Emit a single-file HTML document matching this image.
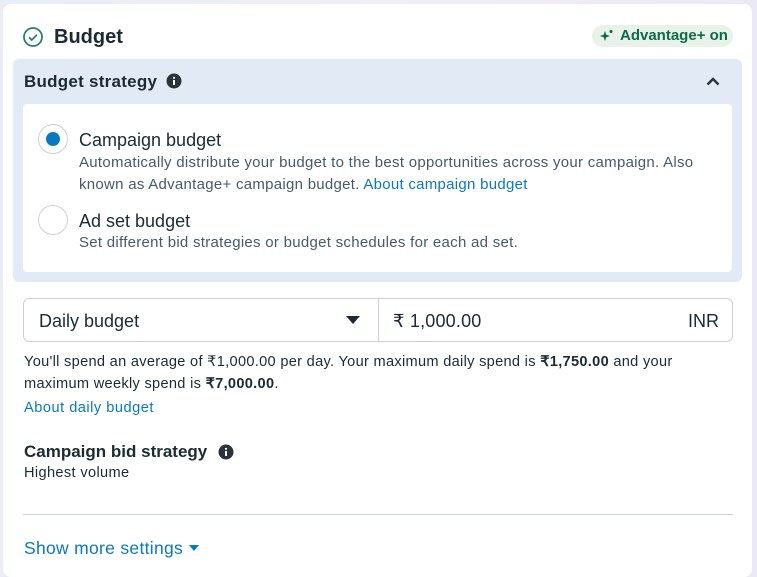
<!DOCTYPE html>
<html><head><meta charset="utf-8"><style>
*{margin:0;padding:0;box-sizing:border-box}
body{width:757px;height:577px;overflow:hidden;background:linear-gradient(90deg,#e8edf6 0%,#f1eef4 50%,#ece9f6 100%);font-family:"Liberation Sans",sans-serif;color:#1c2b33;position:relative}
.a{position:absolute;white-space:nowrap}
.card{position:absolute;left:3px;top:4px;width:749px;height:573px;background:#fff;border-radius:8px}
.blue{color:#0a78be}
</style></head><body>
<div class="card"></div>
<svg class="a" style="left:22px;top:26px" width="22" height="22" viewBox="0 0 22 22"><circle cx="11" cy="11" r="9" fill="none" stroke="#2f7d6b" stroke-width="1.8"/><path d="M7 11.3l2.7 2.7 5.3-5.3" fill="none" stroke="#2f7d6b" stroke-width="1.8"/></svg>
<div class="a" style="left:54px;top:26px;font-size:20px;font-weight:bold">Budget</div>
<div class="a" style="left:592px;top:25px;width:141px;height:22px;border-radius:11px;background:#e9f2e8"></div>
<svg class="a" style="left:599px;top:28px" width="16" height="16" viewBox="0 0 16 16"><path d="M6 3l1.3 3.7L11 8l-3.7 1.3L6 13l-1.3-3.7L1 8l3.7-1.3z" fill="#0b6b4a"/><circle cx="12" cy="3.5" r="1.5" fill="#0b6b4a"/></svg>
<div class="a" style="left:620px;top:27px;font-size:15px;font-weight:bold;color:#0b6b4a">Advantage+ on</div>
<div class="a" style="left:13px;top:59px;width:729px;height:223px;background:#e2ebf5;border-radius:6px"></div>
<div class="a" style="left:24px;top:72px;font-size:17px;font-weight:bold;letter-spacing:0.25px">Budget strategy</div>
<svg class="a" style="left:166px;top:73px" width="16" height="16" viewBox="0 0 16 16"><circle cx="8" cy="8" r="7.5" fill="#2a3339"/><rect x="7" y="7" width="2" height="5" fill="#fff"/><circle cx="8" cy="4.8" r="1.1" fill="#fff"/></svg>
<svg class="a" style="left:705px;top:76px" width="16" height="12" viewBox="0 0 16 12"><path d="M2.5 8.5L8 3l5.5 5.5" fill="none" stroke="#2a3339" stroke-width="2.4"/></svg>
<div class="a" style="left:23px;top:104px;width:709px;height:168px;background:#fff;border-radius:4px"></div>
<div class="a" style="left:38px;top:124px;width:30px;height:30px;border-radius:50%;border:1px solid #ccd0d5;background:#fff"></div>
<div class="a" style="left:46px;top:132px;width:14px;height:14px;border-radius:50%;background:#0a78be"></div>
<div class="a" style="left:79px;top:130px;font-size:18px">Campaign budget</div>
<div class="a" style="left:79px;top:152px;font-size:15px;line-height:22px;letter-spacing:0.28px;color:#465a69">Automatically distribute your budget to the best opportunities across your campaign. Also<br>known as Advantage+ campaign budget. <span class="blue">About campaign budget</span></div>
<div class="a" style="left:38px;top:205px;width:30px;height:30px;border-radius:50%;border:1px solid #ccd0d5;background:#fff"></div>
<div class="a" style="left:79px;top:211px;font-size:18px">Ad set budget</div>
<div class="a" style="left:79px;top:234px;font-size:15px;letter-spacing:0.28px;color:#465a69">Set different bid strategies or budget schedules for each ad set.</div>
<div class="a" style="left:23px;top:298px;width:710px;height:44px;border:1px solid #ccd0d5;border-radius:6px"></div>
<div class="a" style="left:378px;top:299px;width:1px;height:42px;background:#ccd0d5"></div>
<div class="a" style="left:39px;top:311px;font-size:18px">Daily budget</div>
<svg class="a" style="left:345px;top:315px" width="16" height="10" viewBox="0 0 16 10"><path d="M1 1h14L8 9z" fill="#1c2b33"/></svg>
<div class="a" style="left:393px;top:311px;font-size:18px;letter-spacing:0.2px">₹ 1,000.00</div>
<div class="a" style="left:688px;top:311px;font-size:18px">INR</div>
<div class="a" style="left:24px;top:351px;font-size:14.6px;line-height:22px;letter-spacing:0.3px">You'll spend an average of ₹1,000.00 per day. Your maximum daily spend is <b>₹1,750.00</b> and your<br>maximum weekly spend is <b>₹7,000.00</b>.</div>
<div class="a blue" style="left:24px;top:400px;font-size:14.6px;letter-spacing:0.5px">About daily budget</div>
<div class="a" style="left:24px;top:442px;font-size:17px;font-weight:bold">Campaign bid strategy</div>
<svg class="a" style="left:218px;top:444px" width="16" height="16" viewBox="0 0 16 16"><circle cx="8" cy="8" r="7.5" fill="#2a3339"/><rect x="7" y="7" width="2" height="5" fill="#fff"/><circle cx="8" cy="4.8" r="1.1" fill="#fff"/></svg>
<div class="a" style="left:24px;top:465px;font-size:14.6px;letter-spacing:0.35px">Highest volume</div>
<div class="a" style="left:23px;top:514px;width:710px;height:1px;background:#cbd2d9"></div>
<div class="a blue" style="left:24px;top:538px;font-size:17.5px;letter-spacing:0.3px">Show more settings</div>
<svg class="a" style="left:188px;top:544px" width="12" height="8" viewBox="0 0 12 8"><path d="M1 1h10L6 7z" fill="#0a78be"/></svg>
</body></html>
